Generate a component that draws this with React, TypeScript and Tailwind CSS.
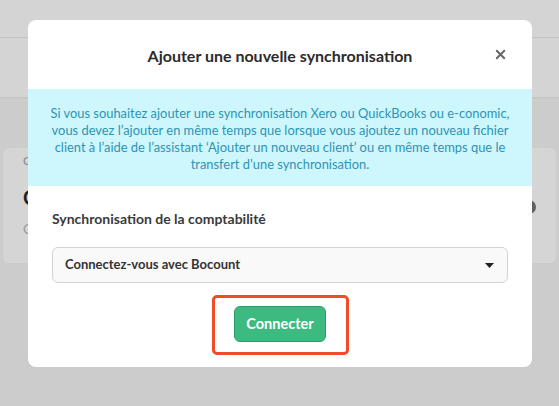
import { X } from 'lucide-react';

export default function App() {
  return (
    <div className="relative w-[559px] h-[406px] overflow-hidden bg-[#cccccc] font-['Lato','Liberation_Sans',sans-serif]">
      {/* Page behind the overlay */}
      <div className="flex flex-col">
        <div className="h-[38px] bg-[#d4d4d4] border-b border-[#c2c2c2]" />
        <div className="h-[60px] bg-[#d4d4d4] border-b border-[#c4c4c4]" />
        <div className="h-[50px]" />
        <div className="mx-[3px] h-[115px] rounded-md bg-[#d5d5d5] px-5 pt-[4px] flex items-start justify-between">
          <div className="flex flex-col">
            <span className="text-[12px] text-[#8a8a8a] leading-4 mt-[1px]">Client</span>
            <span className="text-[20px] font-bold text-[#222] leading-6 mt-[16px]">Client</span>
            <span className="text-[13px] text-[#9a9a9a] leading-4 mt-[12px]">Client</span>
          </div>
          <div className="mt-[48px] w-[14px] h-[14px] rounded-full bg-[#5f5f5f]" />
        </div>
      </div>

      {/* Modal */}
      <div className="absolute left-[28px] top-[20px] w-[504px] h-[347px] bg-white rounded-lg overflow-hidden flex flex-col">
        <div className="relative h-[69px] flex items-center justify-center">
          <h2 className="text-[16px] font-bold text-[#2b2b2b] mt-[2px]">Ajouter une nouvelle synchronisation</h2>
          <button className="absolute right-[24px] top-[27px] text-[#666]">
            <X size={15} strokeWidth={3} />
          </button>
        </div>
        <div className="h-[97px] bg-[#cdf7fd] px-2 pt-[16px] text-center text-[12.9px] leading-[17px] text-[#2f93b4] whitespace-nowrap">
          Si vous souhaitez ajouter une synchronisation Xero ou QuickBooks ou e-conomic,
          <br />
          vous devez l’ajouter en même temps que lorsque vous ajoutez un nouveau fichier
          <br />
          client à l’aide de l’assistant ‘Ajouter un nouveau client’ ou en même temps que le
          <br />
          transfert d’une synchronisation.
        </div>
        <div className="px-6 pt-[25px] flex flex-col">
          <label className="text-[14px] font-bold text-[#3a3a3a] leading-4">Synchronisation de la comptabilité</label>
          <div className="mt-[20px] h-[36px] rounded-md border border-[#d4d4d4] bg-[#f9f9f9] flex items-center justify-between pl-3 pr-[13px]">
            <span className="text-[13px] font-bold text-[#333]">Connectez-vous avec Bocount</span>
            <svg width="9" height="5" viewBox="0 0 9 5"><path d="M0 0h9L4.5 5z" fill="#222" /></svg>
          </div>
          <div className="mt-[12px] flex justify-center">
            <div className="border-[3px] border-[#f24b2c] rounded-[5px] w-[137px] h-[60px] flex items-center justify-center">
              <button className="w-[92px] h-[36px] rounded-md bg-[#3cba80] border border-[#2e9d6b] text-white text-[14.5px] font-bold mb-[3px]">
                Connecter
              </button>
            </div>
          </div>
        </div>
      </div>
    </div>
  );
}
